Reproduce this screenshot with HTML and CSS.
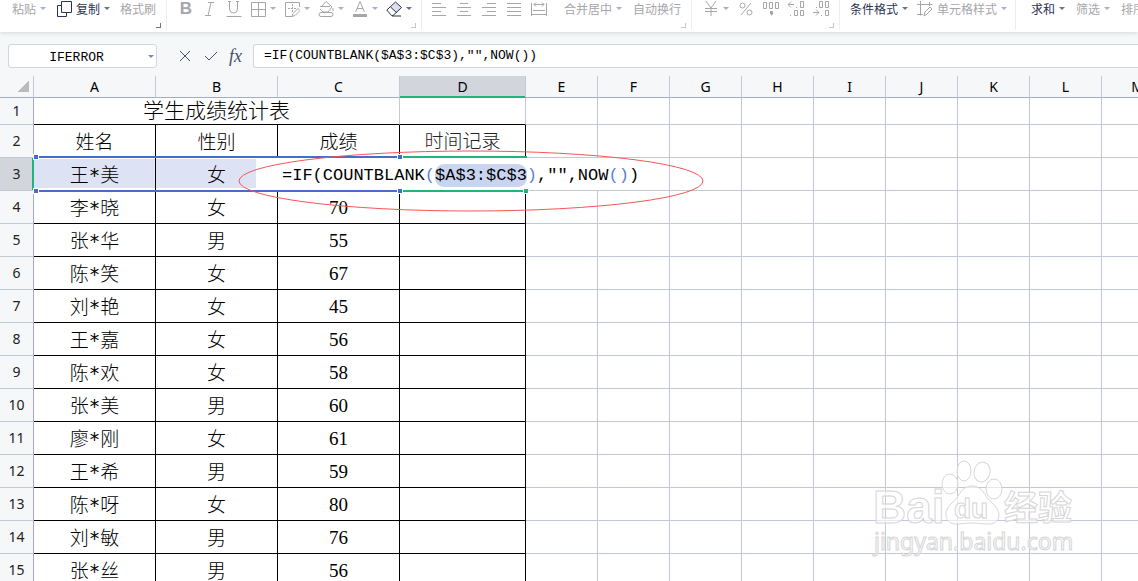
FILE: index.html
```
<!DOCTYPE html>
<html lang="zh-CN">
<head>
    <title>学生成绩统计表</title>
    <meta charset="utf-8">
    <meta name="viewport" content="width=device-width, initial-scale=1">
    <link rel="stylesheet" href="styles.css">
</head>
<body>
    <header class="toolbar">
        <div class="group clipboard">
            <button class="tool">粘贴<i class="caret"></i></button>
            <button class="tool on">
                <svg class="icon" viewBox="0 0 16 16"><path d="M5.5 .5h10v11h-10zM5.5 4.500h-4v11h9v-4"/></svg>
                复制<i class="caret"></i>
            </button>
            <button class="tool">格式刷</button>
            <i class="corner dark"></i>
        </div>
        <div class="group font">
            <button class="tool" aria-label="加粗"><b class="glyph">B</b></button>
            <button class="tool" aria-label="倾斜"><svg class="icon" viewBox="0 0 16 16"><path d="M6 1.500h6M3 14.500h6M9 1.500l-3 13"/></svg></button>
            <button class="tool" aria-label="下划线"><svg class="icon" viewBox="0 0 16 16"><path d="M3.500 0v8a4 4 0 0 0 8 0V0M.5 15.500h15M2 .5h3M10 .5h3"/></svg></button>
            <button class="tool" aria-label="边框"><svg class="icon" viewBox="0 0 16 16"><path d="M1.500 1.500h14v14h-14zM8.500 1.500v14M1.500 8.500h14"/></svg><i class="caret"></i></button>
            <button class="tool" aria-label="绘图边框"><svg class="icon" viewBox="0 0 16 16"><path d="M8 15.500H1.500v-14h14V6"/><path stroke-dasharray="2 1" d="M8.500 3v9M4 7.500h9"/><path d="M8 15.500l1-3 5-5 2 2-5 5z"/></svg><i class="caret"></i></button>
            <button class="tool" aria-label="填充颜色"><svg class="icon" viewBox="0 0 16 16"><path d="M2 5.500h10M3 6l5-5.500L14 6l-4 5H5L2 8M3 11.500h10a2 2 0 0 1 0 4H3a2 2 0 0 1 0-4zM15 7v3"/></svg><i class="caret"></i></button>
            <button class="tool" aria-label="字体颜色"><svg class="icon" viewBox="0 0 16 16"><path d="M3.500 11L8 .5 12.500 11M5 7.500h6"/><path class="bar" d="M1 13h14v3H1z"/></svg><i class="caret"></i></button>
            <button class="tool on" aria-label="清除"><svg class="icon" viewBox="0 0 16 16"><path class="tint" d="M4.500 6L10 1l6 5.500-5 5.500z"/><path d="M.8 9L9.500 1l6 5.500-8.500 8H5.500zM4.500 6l6.500 6M6 15h9"/></svg><i class="caret"></i></button>
            <i class="corner"></i>
        </div>
        <div class="group align">
            <div class="icons">
                <button class="tool" aria-label="左对齐"><svg class="icon" viewBox="0 0 16 16"><path d="M1 2.500h9M1 6.500h14M1 10.500h9M1 14.500h14"/></svg></button>
                <button class="tool" aria-label="居中"><svg class="icon" viewBox="0 0 16 16"><path d="M4 2.500h8M1 6.500h14M4 10.500h8M1 14.500h14"/></svg></button>
                <button class="tool" aria-label="右对齐"><svg class="icon" viewBox="0 0 16 16"><path d="M6 2.500h9M1 6.500h14M6 10.500h9M1 14.500h14"/></svg></button>
                <button class="tool" aria-label="两端对齐"><svg class="icon" viewBox="0 0 16 16"><path d="M1 2.500h14M1 6.500h14M1 10.500h14M1 14.500h14"/></svg></button>
                <button class="tool" aria-label="分散对齐"><svg class="icon" viewBox="0 0 16 16"><path d="M.5 2v13M15.500 2v13M3 3.500h10M5 1.500l-2 2 2 2M11 1.500l2 2-2 2M2 9.500h12M.5 13.500h15"/></svg></button>
            </div>
            <button class="tool">合并居中<i class="caret"></i></button>
            <button class="tool">自动换行</button>
            <i class="corner"></i>
        </div>
        <div class="group number">
            <button class="tool" aria-label="货币"><svg class="icon" viewBox="0 0 16 16"><path d="M3 0l5 7 5-7M8 7v8M2 7.500h12M2 10.500h12"/></svg><i class="caret"></i></button>
            <button class="tool" aria-label="百分比"><svg class="icon" viewBox="0 0 16 16"><path d="M13 2L3 14"/><circle cx="4.500" cy="4.500" r="2.500"/><circle cx="11.500" cy="11.500" r="2.500"/></svg></button>
            <button class="tool" aria-label="千位分隔"><svg class="icon" viewBox="0 0 16 16"><path d="M.5 1.500h3v6h-3zM6.500 1.500h3v6h-3zM12.500 1.500h3v6h-3z"/><path class="bar" d="M7 10h3v3l-2 2v-2H7z"/></svg></button>
            <button class="tool" aria-label="增加小数位"><svg class="icon" viewBox="0 0 16 16"><path d="M0 3.500h6M3 .5l-3 3 3 3M8 6.500h1M12.500 .5h3v6h-3zM2 14.500h1M6.500 9.500h3v5h-3zM12.500 9.500h3v5h-3z"/></svg></button>
            <button class="tool" aria-label="减少小数位"><svg class="icon" viewBox="0 0 16 16"><path d="M3 6.500h1M6.500 .5h3v6h-3zM12.500 .5h3v6h-3zM0 11.500h6M3 8.500l3 3-3 3M8 14.500h1M12.500 9.500h3v5h-3z"/></svg></button>
            <i class="corner"></i>
        </div>
        <div class="group style">
            <button class="tool on">条件格式<i class="caret"></i></button>
            <button class="tool">
                <svg class="icon" viewBox="0 0 16 16"><path d="M0 3.500h15.500M3.500 0v14.500M12.500 1v4M0 13.500h6M7 15l1-4 5-5 2 2-5 5z"/></svg>
                单元格样式<i class="caret"></i>
            </button>
        </div>
        <div class="group edit">
            <button class="tool on">求和<i class="caret"></i></button>
            <button class="tool">筛选<i class="caret"></i></button>
            <button class="tool">排序<i class="caret"></i></button>
        </div>
    </header>

    <div class="formula-bar">
        <div class="name-box">
            <input type="text" value="IFERROR" aria-label="名称框">
            <i class="caret"></i>
        </div>
        <div class="actions">
            <button aria-label="取消"><svg class="icon" viewBox="0 0 16 16"><path d="M3 3l10 10M13 3L3 13"/></svg></button>
            <button aria-label="输入"><svg class="icon" viewBox="0 0 16 16"><path d="M2 8l4 4 8-8"/></svg></button>
            <button class="fx" aria-label="插入函数">fx</button>
        </div>
        <input class="formula" type="text" value='=IF(COUNTBLANK($A$3:$C$3),"",NOW())' aria-label="编辑栏">
    </div>

    <main class="sheet">
        <table>
            <colgroup>
                <col class="c-row"><col class="c-data"><col class="c-data"><col class="c-data"><col class="c-time">
                <col><col><col><col><col><col><col><col><col>
            </colgroup>
            <thead>
                <tr><th class="all"></th><th>A</th><th>B</th><th>C</th><th class="current">D</th><th>E</th><th>F</th><th>G</th><th>H</th><th>I</th><th>J</th><th>K</th><th>L</th><th>M</th></tr>
            </thead>
            <tbody>
                <tr class="title"><th>1</th><td colspan="3" class="k">学生成绩统计表</td><td class="k-bottom"></td><td></td><td></td><td></td><td></td><td></td><td></td><td></td><td></td><td></td></tr>
                <tr><th>2</th><td class="k">姓名</td><td class="k">性别</td><td class="k">成绩</td><td class="k time">时间记录</td><td></td><td></td><td></td><td></td><td></td><td></td><td></td><td></td><td></td></tr>
                <tr><th class="current">3</th><td class="k ref">王*美</td><td class="k ref">女</td><td class="k"></td><td class="k"></td><td></td><td></td><td></td><td></td><td></td><td></td><td></td><td></td><td></td></tr>
                <tr><th>4</th><td class="k">李*晓</td><td class="k">女</td><td class="k num">70</td><td class="k"></td><td></td><td></td><td></td><td></td><td></td><td></td><td></td><td></td><td></td></tr>
                <tr><th>5</th><td class="k">张*华</td><td class="k">男</td><td class="k num">55</td><td class="k"></td><td></td><td></td><td></td><td></td><td></td><td></td><td></td><td></td><td></td></tr>
                <tr><th>6</th><td class="k">陈*笑</td><td class="k">女</td><td class="k num">67</td><td class="k"></td><td></td><td></td><td></td><td></td><td></td><td></td><td></td><td></td><td></td></tr>
                <tr><th>7</th><td class="k">刘*艳</td><td class="k">女</td><td class="k num">45</td><td class="k"></td><td></td><td></td><td></td><td></td><td></td><td></td><td></td><td></td><td></td></tr>
                <tr><th>8</th><td class="k">王*嘉</td><td class="k">女</td><td class="k num">56</td><td class="k"></td><td></td><td></td><td></td><td></td><td></td><td></td><td></td><td></td><td></td></tr>
                <tr><th>9</th><td class="k">陈*欢</td><td class="k">女</td><td class="k num">58</td><td class="k"></td><td></td><td></td><td></td><td></td><td></td><td></td><td></td><td></td><td></td></tr>
                <tr><th>10</th><td class="k">张*美</td><td class="k">男</td><td class="k num">60</td><td class="k"></td><td></td><td></td><td></td><td></td><td></td><td></td><td></td><td></td><td></td></tr>
                <tr><th>11</th><td class="k">廖*刚</td><td class="k">女</td><td class="k num">61</td><td class="k"></td><td></td><td></td><td></td><td></td><td></td><td></td><td></td><td></td><td></td></tr>
                <tr><th>12</th><td class="k">王*希</td><td class="k">男</td><td class="k num">59</td><td class="k"></td><td></td><td></td><td></td><td></td><td></td><td></td><td></td><td></td><td></td></tr>
                <tr><th>13</th><td class="k">陈*呀</td><td class="k">女</td><td class="k num">80</td><td class="k"></td><td></td><td></td><td></td><td></td><td></td><td></td><td></td><td></td><td></td></tr>
                <tr><th>14</th><td class="k">刘*敏</td><td class="k">男</td><td class="k num">76</td><td class="k"></td><td></td><td></td><td></td><td></td><td></td><td></td><td></td><td></td><td></td></tr>
                <tr><th>15</th><td class="k">张*丝</td><td class="k">男</td><td class="k num">56</td><td class="k"></td><td></td><td></td><td></td><td></td><td></td><td></td><td></td><td></td><td></td></tr>
            </tbody>
        </table>

        <!-- cell editor and range marks, over the grid -->
        <div class="editor">=IF(COUNTBLANK<span class="p">(</span><span class="range">$A$3:$C$3</span><span class="p">)</span>,"",NOW<span class="p">()</span>)</div>
        <div class="cell-border"><i></i></div>
        <div class="range-border"><i></i><i></i><i></i><i></i></div>
        <svg class="circle" viewBox="0 0 468 64"><ellipse cx="234" cy="32" rx="232" ry="30"/></svg>

        <svg class="watermark" viewBox="0 0 220 110">
            <text class="brand" x="11" y="68">Bai</text>
            <g>
                <ellipse cx="88" cy="29" rx="8" ry="10"/>
                <ellipse cx="102" cy="16" rx="7" ry="10"/>
                <ellipse cx="120" cy="17" rx="8" ry="10" transform="rotate(12 120 17)"/>
                <ellipse cx="132" cy="34" rx="8" ry="10"/>
                <path d="M110 31c11 0 12 10 20 17 11 9 8 21-3 21-8 0-10-1-17-1s-10 1-16 1c-11 0-14-12-4-21 8-7 9-17 20-17z"/>
            </g>
            <text class="du" x="92" y="63">du</text>
            <text class="cn" x="142" y="65">经验</text>
            <text class="site" x="12" y="95">jingyan.baidu.com</text>
        </svg>
    </main>
</body>
</html>
```
FILE: styles.css
```
:root {
    --bar-bg: #f5f7f9;
    --line: #c2c8d8;
    --head-line: #a5abc2;
    --green: #1fb57c;
    --blue: #456dd0;
    --muted: #a5a6aa;
    --mono: "Liberation Mono", "Noto Sans CJK SC", monospace;
    --cjk: "Noto Sans CJK SC", sans-serif;
}

* {
    margin: 0;
    padding: 0;
    box-sizing: border-box;
}

body {
    display: flex;
    flex-direction: column;
    height: 100vh;
    overflow: hidden;
    font-family: var(--cjk);
    background: var(--bar-bg);
    color: #000;
}

button,
input {
    border: 0;
    background: none;
    font-family: inherit;
    outline: none;
}

.icon {
    flex: none;
    width: 16px;
    height: 16px;
    fill: none;
    stroke: currentColor;
}

.caret {
    flex: none;
    width: 6px;
    border: 3px solid transparent;
    border-top-color: #a9afc4;
    border-bottom: 0;
}

/* toolbar */
.toolbar {
    display: flex;
    flex: none;
    height: 32px;
    background: #fff;
    box-shadow: 0 1px 4px #d5d7da;
    white-space: nowrap;
}

.group {
    position: relative;
    display: flex;
    flex: none;
    align-items: flex-start;
    gap: 9px;
    height: 30px;
    padding-left: 11px;
    border-right: 1px solid #eceef1;
}

.clipboard {
    width: 167px;
    padding-left: 12px;
    gap: 10px;
}

.font {
    width: 255px;
    gap: 8px;
}

.align {
    width: 270px;
    padding-left: 9px;
    gap: 11px;
}

.number {
    width: 148px;
}

.style {
    width: 176px;
    padding-left: 10px;
}

.edit {
    padding-left: 15px;
    border: 0;
    gap: 11px;
}

.icons {
    display: flex;
    gap: 9px;
    margin-right: 6px;
}

.tool {
    display: flex;
    flex: none;
    align-items: center;
    gap: 4px;
    height: 17px;
    font-size: 12px;
    line-height: 17px;
    color: var(--muted);
}

.tool.on {
    color: #2a3350;
}

.on .caret {
    border-top-color: #69738f;
}

.glyph {
    width: 16px;
    font: bold 17px/17px "Liberation Sans", sans-serif;
}

.bar {
    fill: currentColor;
    stroke: none;
}

.tint {
    fill: #dde0ea;
    stroke: none;
}

.corner {
    position: absolute;
    right: 5px;
    bottom: 2px;
    width: 5px;
    height: 5px;
    border: solid #c3c7d4;
    border-width: 0 1px 1px 0;
}

.corner.dark {
    border-color: #69738f;
}

/* formula bar */
.formula-bar {
    display: flex;
    flex: none;
    height: 44px;
    padding: 12px 0 8px 8px;
}

.name-box {
    display: flex;
    align-items: center;
    width: 149px;
    padding-right: 2px;
    border: 1px solid #d3d6de;
    border-radius: 3px;
    background: #fff;
}

.name-box input {
    width: 100%;
    min-width: 0;
    padding: 2px 4px 0 0;
    font: 13px var(--mono);
    text-align: center;
}

.name-box .caret {
    border-top-color: #8189a0;
}

.actions {
    display: flex;
    align-items: center;
    gap: 10px;
    width: 96px;
    padding-left: 20px;
    color: #464f68;
}

.actions button {
    display: flex;
    width: 16px;
    color: inherit;
}

.actions .fx {
    font: italic 18px "Liberation Serif", serif;
}

.formula {
    flex: 1;
    padding: 0 0 2px 10px;
    border: 1px solid #d3d6de;
    border-right: 0;
    border-radius: 3px 0 0 3px;
    background: #fff;
    font: 13px var(--mono);
}

/* grid */
.sheet {
    position: relative;
    flex: 1;
    overflow: hidden;
    background: #fff;
}

table {
    width: 1174px;
    table-layout: fixed;
    border-spacing: 0;
}

.c-row {
    width: 34px;
}

.c-data {
    width: 122px;
}

.c-time {
    width: 126px;
}

th {
    height: 33px;
    border-right: 1px solid var(--head-line);
    border-bottom: 1px solid var(--line);
    background: var(--bar-bg);
    font: 14px/20px "Noto Sans", sans-serif;
    color: #222;
}

thead th {
    height: 22px;
    border-right-color: var(--line);
    border-bottom-color: var(--head-line);
    color: #000;
}

thead .all {
    background: linear-gradient(135deg, transparent 50%, #b9bbbf 50%) 18px 5px / 11px 11px no-repeat var(--bar-bg);
}

th.current {
    background: #d2d5dc;
}

thead .current {
    box-shadow: inset 0 -1px var(--green);
    border-bottom-color: var(--green);
}

tbody .current {
    box-shadow: inset -1px 0 var(--green);
    border-right-color: var(--green);
}

td {
    padding-top: 2px;
    border-right: 1px solid var(--line);
    border-bottom: 1px solid var(--line);
    font-family: "DejaVu Sans Mono", "Noto Sans CJK SC", monospace;
    font-size: 19px;
    font-weight: 300;
    line-height: 28px;
    text-align: center;
    white-space: nowrap;
}

.title th {
    height: 27px;
}

.title td {
    padding: 0;
    font-size: 21px;
    line-height: 26px;
}

.k {
    border-color: #000;
}

.title .k {
    border-right-color: var(--line);
}

.k-bottom {
    border-bottom-color: #000;
}

.time {
    padding-top: 0;
    color: #222;
}

.ref {
    background: #dde3f5;
    box-shadow: inset 0 1px #fff, inset 0 -2px #fff;
}

.num {
    font-family: "Liberation Serif", serif;
}

.range-border,
.cell-border {
    position: absolute;
    top: 80px;
    height: 36px;
    border: solid var(--blue);
    border-width: 2px 0;
}

.range-border {
    left: 34px;
    width: 366px;
}

.cell-border {
    left: 400px;
    width: 127px;
    border-color: var(--green);
}

.range-border i,
.cell-border i {
    position: absolute;
    width: 6px;
    height: 6px;
    border: 1px solid #fff;
    background: var(--blue);
}

.cell-border i {
    right: -2px;
    bottom: -4px;
    background: var(--green);
}

.range-border i:nth-child(odd) {
    left: -1px;
}

.range-border i:nth-child(even) {
    right: -3px;
}

.range-border i:nth-child(-n+2) {
    top: -4px;
}

.range-border i:nth-child(n+3) {
    bottom: -4px;
}

.editor {
    position: absolute;
    top: 82px;
    left: 256px;
    width: 412px;
    height: 32px;
    padding-left: 26px;
    background: #fff;
    font: 17px/36px var(--mono);
    white-space: nowrap;
}

.range {
    padding: 2px 0;
    border-radius: 9px;
    background: #c9d4f0;
}

.p {
    color: #5b7fd8;
}

.circle {
    position: absolute;
    top: 73px;
    left: 237px;
    width: 468px;
    height: 64px;
    fill: none;
    stroke: #f75555;
}

.watermark {
    position: absolute;
    right: 56px;
    bottom: 16px;
    width: 220px;
    height: 110px;
    fill: #fff;
    fill-opacity: 0.6;
    stroke: #d6d6d6;
}

.brand {
    font: bold 46px "Liberation Sans", sans-serif;
}

.du {
    font: bold 28px "Liberation Sans", sans-serif;
}

.cn {
    font: bold 34px var(--cjk);
}

.site {
    font: 23px "Noto Sans", sans-serif;
}
```
